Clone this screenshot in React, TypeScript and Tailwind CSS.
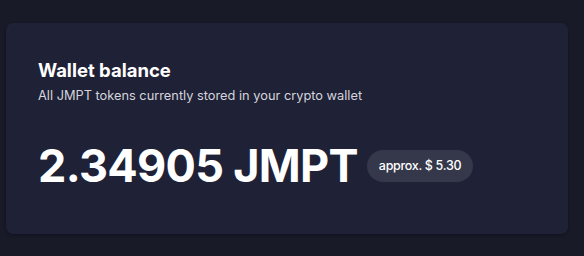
export default function App() {
  return (
    <div className="w-[584px] h-[256px] bg-[#191a28] pt-[23px] pl-[6px]" style={{ fontFamily: "Inter, 'Open Sans', sans-serif" }}>
      <div className="w-[562px] h-[211px] rounded-[7px] bg-[#1f2136] shadow-[0_1px_3px_rgba(0,0,0,0.35)] pl-[32px] pt-[35px]">
        <h2 className="text-[18.5px] leading-6 font-bold text-white">Wallet balance</h2>
        <p className="mt-[6px] text-[12.8px] leading-4 text-[#d4d5dc]">All JMPT tokens currently stored in your crypto wallet</p>
        <div className="mt-[38px] flex items-center gap-[9px]">
          <span className="text-[45px] leading-[48px] font-bold text-white tracking-[-0.7px]">2.34905 JMPT</span>
          <span className="rounded-full bg-[#35374a] h-[32px] px-[12px] flex items-center text-[12.5px] font-medium text-white tracking-[-0.3px]">approx. $ 5.30</span>
        </div>
      </div>
    </div>
  );
}
